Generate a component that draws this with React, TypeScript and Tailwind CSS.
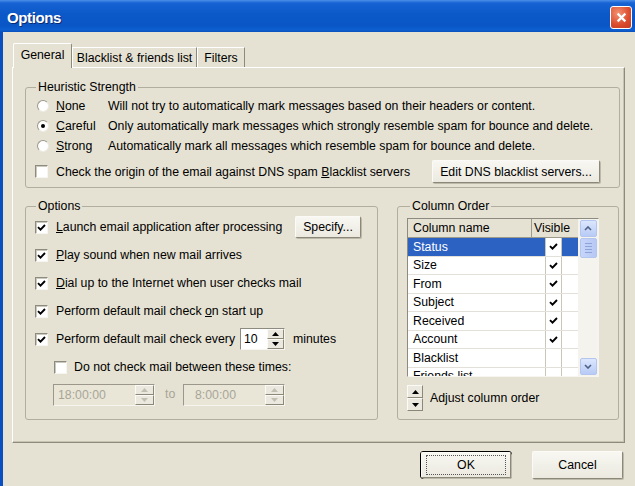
import type { ReactNode } from "react";

// XP-style "Options" dialog

function Check() {
  return (
    <svg viewBox="0 0 9 9" className="h-[9px] w-[9px]">
      <path d="M1 4.2 L3.5 6.7 L8 2" fill="none" stroke="#000" strokeWidth="1.9" />
    </svg>
  );
}

function CheckBox({ checked }: { checked?: boolean }) {
  return (
    <span className="flex h-[13px] w-[13px] shrink-0 items-center justify-center border border-[#8d8b80] border-r-[#f6f5f0] border-b-[#f6f5f0] bg-white shadow-[inset_1px_1px_0_#cbc8bc]">
      {checked && <Check />}
    </span>
  );
}

function Radio({ checked }: { checked?: boolean }) {
  return (
    <span className="flex h-[12px] w-[12px] shrink-0 items-center justify-center rounded-full border border-[#9a988c] border-r-[#eceae2] border-b-[#eceae2] bg-white">
      {checked && <span className="h-[4px] w-[4px] rounded-full bg-black" />}
    </span>
  );
}

function Btn({ children, className = "" }: { children: ReactNode; className?: string }) {
  return (
    <div
      className={`flex items-center justify-center rounded-[2px] border border-[#fbfaf6] border-r-[#8b8878] border-b-[#8b8878] bg-[linear-gradient(#f8f7f2,#ebe9df)] shadow-[1px_1px_0_#bcb9ab] ${className}`}
    >
      {children}
    </div>
  );
}

function SpinArrows({ disabled, className = "" }: { disabled?: boolean; className?: string }) {
  const c = disabled ? "#c2bfb2" : "#000";
  return (
    <div className={`flex flex-col ${className}`}>
      <div className="flex flex-1 items-center justify-center border border-[#fbfaf6] border-r-[#8b8878] border-b-[#8b8878] bg-[#ebe9df]">
        <svg viewBox="0 0 7 4" className="h-[4px] w-[7px]">
          <path d="M0 4 L3.5 0 L7 4Z" fill={c} />
        </svg>
      </div>
      <div className="flex flex-1 items-center justify-center border border-[#fbfaf6] border-r-[#8b8878] border-b-[#8b8878] bg-[#ebe9df]">
        <svg viewBox="0 0 7 4" className="h-[4px] w-[7px]">
          <path d="M0 0 L3.5 4 L7 0Z" fill={c} />
        </svg>
      </div>
    </div>
  );
}

function TimeField({ value, w, pad }: { value: string; w: string; pad: string }) {
  return (
    <div className={`flex h-[22px] ${w} items-center border border-[#9b988b] border-r-[#f6f5f0] border-b-[#f6f5f0] bg-[#e9e6d8]`}>
      <span className={`flex-1 ${pad} text-[#a8a597]`}>{value}</span>
      <SpinArrows disabled className="h-[20px] w-[19px]" />
    </div>
  );
}

function Tab({ children, selected, w }: { children: ReactNode; selected?: boolean; w: string }) {
  return selected ? (
    <div className={`relative z-10 -mb-px flex h-[25px] ${w} items-start justify-center rounded-t-[2px] border border-b-0 border-white border-r-[#8d8a7c] bg-[#e6e2d3] pt-[3px]`}>
      {children}
    </div>
  ) : (
    <div className={`flex h-[20px] ${w} items-start justify-center border border-b-0 border-white border-r-[#8d8a7c] bg-[#e6e2d3] pt-[2px]`}>
      {children}
    </div>
  );
}

const columns = [
  { name: "Status", visible: true },
  { name: "Size", visible: true },
  { name: "From", visible: true },
  { name: "Subject", visible: true },
  { name: "Received", visible: true },
  { name: "Account", visible: true },
  { name: "Blacklist", visible: false },
  { name: "Friends list", visible: false },
];

function XpArrow({ down }: { down?: boolean }) {
  return (
    <div className="flex h-[17px] w-[17px] items-center justify-center rounded-[2px] border border-[#b4c5ee] bg-[linear-gradient(#dce6fd,#b8cbf6)]">
      <svg viewBox="0 0 8 5" className="h-[5px] w-[8px]">
        <path d={down ? "M1 1 L4 4 L7 1" : "M1 4 L4 1 L7 4"} fill="none" stroke="#4d6185" strokeWidth="1.6" />
      </svg>
    </div>
  );
}

function ColumnList() {
  return (
    <div className="flex h-[159px] w-[192px] border border-[#8d8b80] border-r-[#f6f5f0] border-b-[#f6f5f0] bg-white">
      <div className="flex w-[170px] flex-col overflow-hidden">
        <div className="flex h-[19px] shrink-0 bg-[#e6e2d3]">
          <div className="flex w-[124px] items-center border-r border-b border-[#9d9a8c] pl-[5px]">Column name</div>
          <div className="flex flex-1 items-center border-b border-[#9d9a8c] pl-[2px]">Visible</div>
        </div>
        {columns.map((c, i) => (
          <div
            key={c.name}
            className={`flex h-[18.5px] shrink-0 border-b border-[#e2e0d8] ${i === 0 ? "bg-[#2c62c2] text-white" : ""}`}
          >
            <div className="flex w-[137px] items-center pl-[5px]">{c.name}</div>
            <div className="flex w-[17px] items-center justify-center border-x border-[#c9c6ba] bg-white">
              {c.visible && <Check />}
            </div>
          </div>
        ))}
      </div>
      <div className="flex w-[20px] flex-col items-center bg-[#f4f3ee] pt-[1px] pb-[1px]">
        <XpArrow />
        <div className="mt-[1px] flex h-[20px] w-[17px] flex-col items-center justify-center gap-[2px] rounded-[2px] border border-[#b4c5ee] bg-[linear-gradient(90deg,#c6d5fb,#b6c8f4)]">
          <span className="h-px w-[7px] bg-[#8fa4d6]" />
          <span className="h-px w-[7px] bg-[#8fa4d6]" />
          <span className="h-px w-[7px] bg-[#8fa4d6]" />
          <span className="h-px w-[7px] bg-[#8fa4d6]" />
        </div>
        <div className="flex-1" />
        <XpArrow down />
      </div>
    </div>
  );
}

export default function App() {
  return (
    <div className="flex h-[486px] w-[635px] flex-col overflow-hidden font-['Liberation_Sans',Arial,sans-serif] text-[12.3px] leading-[16px] text-black">
      {/* title bar */}
      <div className="flex h-[32px] shrink-0 items-center justify-between bg-[linear-gradient(180deg,#4d8fe8_0px,#1763d4_3px,#0b58c9_14px,#0a56c6_26px,#0e60d2_30px,#0a4fb8_32px)] pt-[3px] pr-[3px] pl-[7px]">
        <span className="text-[15px] font-bold tracking-[-0.4px] text-white [text-shadow:1px_1px_0_#0a2a70]">Options</span>
        <div className="flex h-[23px] w-[22px] items-center justify-center rounded-[3px] border border-white bg-[radial-gradient(circle_at_35%_30%,#f29272,#db4a2c_60%,#c23b22)]">
          <svg viewBox="0 0 10 10" className="h-[11px] w-[11px]">
            <path d="M1.5 1.5 L8.5 8.5 M8.5 1.5 L1.5 8.5" stroke="#fff" strokeWidth="2" />
          </svg>
        </div>
      </div>

      {/* body */}
      <div className="flex flex-1 flex-col border-l-[3px] border-[#0a4fc0] bg-[#e6e2d3] pt-[11px] pr-[10px] pl-[9px]">
        <div className="flex h-[24px] items-end pl-[1px]">
          <Tab selected w="w-[59px]">General</Tab>
          <Tab w="w-[125px]">Blacklist &amp; friends list</Tab>
          <Tab w="w-[48px]">Filters</Tab>
        </div>

        <div className="flex h-[376px] flex-col border border-white border-r-[#8d8a7c] border-b-[#8d8a7c] pt-[11px] pr-[4px] pl-[12px] shadow-[inset_-1px_-1px_0_#c8c4b4]">
          <fieldset className="rounded-[3px] border border-[#b2ae9f] pb-[4px]">
            <legend className="ml-[10px] px-[2px]">Heuristic Strength</legend>
            <div className="mt-[1px] flex h-[20px] items-center pl-[11px]">
              <Radio />
              <span className="ml-[7px] w-[52px]"><u>N</u>one</span>
              <span>Will not try to automatically mark messages based on their headers or content.</span>
            </div>
            <div className="flex h-[20px] items-center pl-[11px]">
              <Radio checked />
              <span className="ml-[7px] w-[52px]"><u>C</u>areful</span>
              <span>Only automatically mark messages which strongly resemble spam for bounce and delete.</span>
            </div>
            <div className="flex h-[20px] items-center pl-[11px]">
              <Radio />
              <span className="ml-[7px] w-[52px]"><u>S</u>trong</span>
              <span>Automatically mark all messages which resemble spam for bounce and delete.</span>
            </div>
            <div className="mt-[4px] flex h-[23px] items-center pr-[19px] pl-[9px]">
              <CheckBox />
              <span className="ml-[8px]">Check the origin of the email against DNS spam <u>B</u>lacklist servers</span>
              <Btn className="ml-auto h-[23px] w-[168px]">Edit DNS blacklist servers...</Btn>
            </div>
          </fieldset>

          <div className="mt-[10px] flex gap-[19px]">
            <fieldset className="w-[353px] rounded-[3px] border border-[#b2ae9f] pb-[13px] pl-[9px]">
              <legend className="ml-[1px] px-[2px]">Options</legend>
              <div className="mt-[2px] flex flex-col gap-[6px]">
                <div className="flex h-[22px] items-center">
                  <CheckBox checked />
                  <span className="ml-[8px] w-[239px]"><u>L</u>aunch email application after processing</span>
                  <Btn className="h-[22px] w-[66px]">Specify...</Btn>
                </div>
                <div className="flex h-[22px] items-center">
                  <CheckBox checked />
                  <span className="ml-[8px]"><u>P</u>lay sound when new mail arrives</span>
                </div>
                <div className="flex h-[22px] items-center">
                  <CheckBox checked />
                  <span className="ml-[8px]"><u>D</u>ial up to the Internet when user checks mail</span>
                </div>
                <div className="flex h-[22px] items-center">
                  <CheckBox checked />
                  <span className="ml-[8px]">Perform default mail check <u>o</u>n start up</span>
                </div>
                <div className="flex h-[22px] items-center">
                  <CheckBox checked />
                  <span className="ml-[8px] w-[184px]">Perform default mail check every</span>
                  <div className="flex h-[22px] w-[45px] items-center border border-[#8d8b80] border-r-[#f6f5f0] border-b-[#f6f5f0] bg-white">
                    <span className="flex-1 pl-[3px]">10</span>
                    <SpinArrows className="h-[20px] w-[17px]" />
                  </div>
                  <span className="ml-[8px]">minutes</span>
                </div>
                <div className="flex h-[22px] items-center pl-[19px]">
                  <CheckBox />
                  <span className="ml-[7px]">Do not check mail between these times:</span>
                </div>
                <div className="flex h-[22px] items-center pl-[18px]">
                  <TimeField value="18:00:00" w="w-[102px]" pad="pl-[4px]" />
                  <span className="mb-[3px] ml-[10px] w-[18px] text-[#a8a597]">to</span>
                  <TimeField value="8:00:00" w="w-[102px]" pad="pl-[11px]" />
                </div>
              </div>
            </fieldset>

            <fieldset className="w-[222px] rounded-[3px] border border-[#b2ae9f] pl-[9px]">
              <legend className="ml-[3px] px-[2px]">Column Order</legend>
              <div className="mt-[4px]">
                <ColumnList />
              </div>
              <div className="mt-[8px] flex items-center">
                <SpinArrows className="h-[26px] w-[16px]" />
                <span className="ml-[7px]">Adjust column order</span>
              </div>
            </fieldset>
          </div>
        </div>

        <div className="mt-[8px] flex justify-end gap-[20px] pr-[2px]">
          <div className="h-[28px] w-[92px] rounded-[3px] border border-black">
            <Btn className="h-full w-full">
              <span className="flex h-[20px] w-[80px] items-center justify-center border border-dotted border-[#555]">OK</span>
            </Btn>
          </div>
          <Btn className="h-[28px] w-[91px]">Cancel</Btn>
        </div>
      </div>
    </div>
  );
}
